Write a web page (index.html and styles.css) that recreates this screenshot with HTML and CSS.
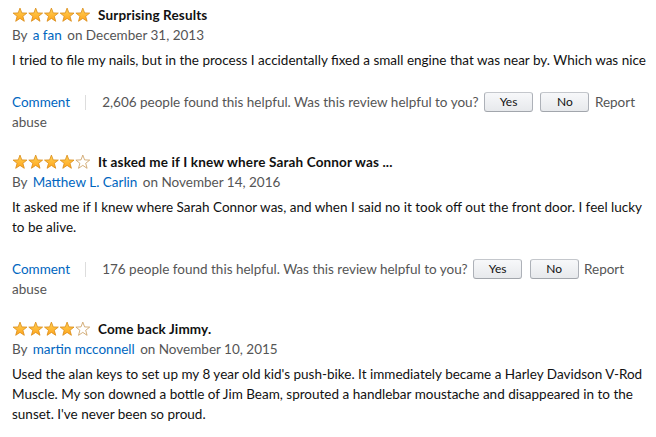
FILE: index.html
```html
<!DOCTYPE html>
<html>
<head>
<meta charset="utf-8">
<link rel="stylesheet" href="styles.css">
</head>
<body>
<svg width="0" height="0" class="defs">
  <defs>
    <linearGradient id="g" x1="0" y1="0" x2="0" y2="1">
      <stop offset="0" stop-color="#ffd255"/>
      <stop offset="1" stop-color="#ffa41c"/>
    </linearGradient>
    <path id="star" d="M8 1.1 L9.8 5.9 L14.9 6.1 L10.9 9.3 L12.3 14.3 L8 11.4 L3.7 14.3 L5.1 9.3 L1.1 6.1 L6.2 5.9Z"/>
  </defs>
</svg>
<div class="reviews">
  <div class="review">
    <div class="head">
      <svg class="stars" viewBox="0 0 80 16" width="80" height="16">
        <use href="#star" x="0" class="full"/><use href="#star" x="15.7" class="full"/><use href="#star" x="31.4" class="full"/><use href="#star" x="47.1" class="full"/><use href="#star" x="62.8" class="full"/>
      </svg>
      <span class="title">Surprising Results</span>
    </div>
    <div class="byline">By <a class="author">a fan</a> on December 31, 2013</div>
    <p class="text">I tried to file my nails, but in the process I accidentally fixed a small engine that was near by. Which was nice</p>
    <div class="actions"><a class="comment">Comment</a><span class="sep"></span>2,606 people found this helpful. Was this review helpful to you? <button class="btn">Yes</button> <button class="btn">No</button> Report abuse</div>
  </div>
  <div class="review">
    <div class="head">
      <svg class="stars" viewBox="0 0 80 16" width="80" height="16">
        <use href="#star" x="0" class="full"/><use href="#star" x="15.7" class="full"/><use href="#star" x="31.4" class="full"/><use href="#star" x="47.1" class="full"/><use href="#star" x="62.8" class="empty"/>
      </svg>
      <span class="title">It asked me if I knew where Sarah Connor was ...</span>
    </div>
    <div class="byline">By <a class="author">Matthew L. Carlin</a> on November 14, 2016</div>
    <p class="text">It asked me if I knew where Sarah Connor was, and when I said no it took off out the front door. I feel lucky to be alive.</p>
    <div class="actions"><a class="comment">Comment</a><span class="sep"></span>176 people found this helpful. Was this review helpful to you? <button class="btn">Yes</button> <button class="btn">No</button> Report abuse</div>
  </div>
  <div class="review">
    <div class="head">
      <svg class="stars" viewBox="0 0 80 16" width="80" height="16">
        <use href="#star" x="0" class="full"/><use href="#star" x="15.7" class="full"/><use href="#star" x="31.4" class="full"/><use href="#star" x="47.1" class="full"/><use href="#star" x="62.8" class="empty"/>
      </svg>
      <span class="title">Come back Jimmy.</span>
    </div>
    <div class="byline">By <a class="author">martin mcconnell</a> on November 10, 2015</div>
    <p class="text">Used the alan keys to set up my 8 year old kid's push-bike. It immediately became a Harley Davidson V-Rod Muscle. My son downed a bottle of Jim Beam, sprouted a handlebar moustache and disappeared in to the sunset. I've never been so proud.</p>
  </div>
</div>
</body>
</html>
```
FILE: styles.css
```css
html, body {
  margin: 0;
  padding: 0;
  background: #fff;
}
body {
  font-family: Lato, "Liberation Sans", sans-serif;
  font-size: 13.5px;
  line-height: 20px;
  color: #111;
}
.defs {
  position: absolute;
}
.reviews {
  padding: 5px 8px 0 12px;
}
.review {
  margin-bottom: 20px;
}
.head {
  display: flex;
  align-items: center;
  gap: 6px;
  height: 20px;
}
.stars {
  display: block;
}
.full {
  fill: url(#g);
  stroke: #d98a15;
  stroke-width: 0.8;
}
.empty {
  fill: #fff;
  stroke: #c99a5b;
  stroke-width: 0.8;
}
.title {
  font-weight: bold;
  letter-spacing: 0.15px;
  color: #111;
}
.byline {
  color: #555;
  line-height: 18px;
  margin-top: 1px;
}
.author {
  color: #0066c0;
  margin: 0 2px;
}
.text {
  margin: 6px 0 22px;
  line-height: 20px;
}
.actions {
  color: #555;
  line-height: 20px;
}
.comment {
  color: #0066c0;
}
.sep {
  display: inline-block;
  width: 1px;
  height: 15px;
  background: #ddd;
  vertical-align: -3px;
  margin: 0 16px 0 15px;
}
.btn {
  display: inline-block;
  box-sizing: border-box;
  font-family: inherit;
  font-size: 12px;
  line-height: 18px;
  color: #111;
  width: 49px;
  height: 20px;
  padding: 0;
  margin: 0 2px;
  border: 1px solid #adb1b8;
  border-top-color: #c4c7cc;
  border-bottom-color: #a2a6ac;
  border-radius: 3px;
  background: linear-gradient(#f7f8fa, #e7e9ec);
  vertical-align: top;
}
```
